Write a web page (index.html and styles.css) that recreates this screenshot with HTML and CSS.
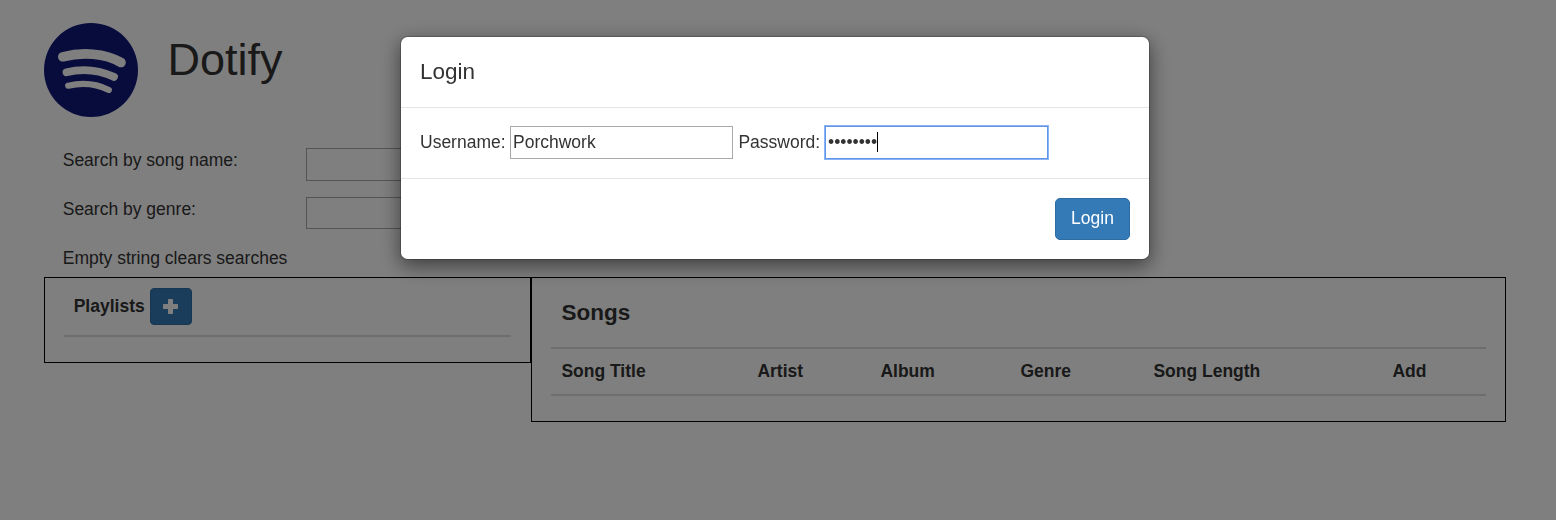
FILE: index.html
```html
<!DOCTYPE html>
<html lang="en">
<head>
<meta charset="utf-8">
<title>Dotify</title>
<link rel="stylesheet" href="styles.css">
</head>
<body>
<div class="page">
  <header class="brand">
    <svg class="logo" viewBox="0 0 94 94">
      <circle cx="47" cy="47" r="47" fill="#10187a"/>
      <g fill="none" stroke="#fff" stroke-linecap="round">
        <path stroke-width="9.6" d="M18.8 33.8C38 28.8 61 30 77 39.5"/>
        <path stroke-width="7.8" d="M22.5 49.3C38 45.4 55 47 70 53.9"/>
        <path stroke-width="6.2" d="M24.2 62.7C38 59.5 52 60.5 64.8 67"/>
      </g>
    </svg>
    <h1 class="title">Dotify</h1>
  </header>
  <div class="search">
    <label class="search-label" for="song">Search by song name:</label>
    <input class="field" id="song" type="text">
    <label class="search-label" for="genre">Search by genre:</label>
    <input class="field field-short" id="genre" type="text">
    <span class="search-label">Empty string clears searches</span>
  </div>
  <main class="columns">
    <section class="playlists">
      <div class="playlists-head">
        <span>Playlists</span>
        <button class="add" aria-label="Add playlist">
          <svg class="plus" viewBox="0 0 15 15"><path fill="#fff" d="M5.8 0h3.4q.8 0 .8.8V5h4.2q.8 0 .8.8v3.4q0 .8-.8.8H10v4.2q0 .8-.8.8H5.8q-.8 0-.8-.8V10H.8Q0 10 0 9.2V5.8Q0 5 .8 5H5V.8Q5 0 5.8 0Z"/></svg>
        </button>
      </div>
    </section>
    <section class="songs">
      <h2 class="songs-title">Songs</h2>
      <div class="songs-head">
        <span>Song Title</span><span>Artist</span><span>Album</span><span>Genre</span><span>Song Length</span><span>Add</span>
      </div>
    </section>
  </main>
</div>
<div class="backdrop">
  <div class="modal" role="dialog">
    <div class="modal-header">Login</div>
    <div class="modal-body">
      <label class="user-label" for="user">Username:</label>
      <input class="field" id="user" type="text" value="Porchwork">
      <span class="pass-label">Password:</span>
      <div class="field focused"><span>••••••••</span><span class="caret"></span></div>
    </div>
    <div class="modal-footer"><button class="login">Login</button></div>
  </div>
</div>
</body>
</html>
```

FILE: styles.css
```css
* { box-sizing: border-box; }
body {
  margin: 0;
  height: 520px;
  overflow: hidden;
  background: #fff;
  color: #333;
  font: 17.5px/25px "Liberation Sans", Arial, sans-serif;
}
.page { padding: 23px 50px 0 44px; }
.brand { display: flex; height: 125px; }
.logo { width: 94px; height: 94px; }
.title { margin: 12px 0 0 29.5px; font-size: 45px; line-height: 50px; font-weight: 400; }
.search {
  display: grid;
  grid-template-columns: 243px 223px;
  grid-template-rows: 49px 49px 31px;
  padding-left: 19px;
}
.search-label { margin-left: -0.3px; white-space: nowrap; }
.field {
  width: 223px;
  height: 33px;
  margin: 0;
  padding: 0 2px;
  border: 1px solid #a9a9a9;
  border-radius: 0;
  background: #fff;
  color: #333;
  font: inherit;
}
.field-short { height: 32px; }
.columns { display: flex; align-items: flex-start; font-weight: 700; }
.playlists { width: 487px; height: 86px; padding: 10px 19px 0; border: 1px solid #000; }
.playlists-head {
  display: flex;
  gap: 5px;
  height: 49px;
  padding-left: 9.7px;
  border-bottom: 2px solid #ddd;
}
.playlists-head > span { padding-top: 6px; }
.add {
  width: 42px;
  height: 37px;
  padding: 0 1px 0 0;
  border: 1px solid #2e6da4;
  border-radius: 4px;
  background: #337ab7;
  display: flex;
  align-items: center;
  justify-content: center;
}
.plus { width: 15px; height: 15px; }
.songs { width: 975px; height: 145px; padding: 0 19px; border: 1px solid #000; }
.songs-title { margin: 0; padding: 22px 0 0 10.4px; height: 69px; font-size: 22.5px; line-height: 25px; }
.songs-head {
  display: grid;
  grid-template-columns: 196px 123px 140px 133px 239px auto;
  height: 49px;
  padding: 10px 0 0 10.4px;
  border-top: 2px solid #ddd;
  border-bottom: 2px solid #ddd;
}
.backdrop {
  position: fixed;
  inset: 0;
  padding-top: 36px;
  background: rgba(0, 0, 0, 0.5);
}
.modal {
  width: 750px;
  margin: 0 0 0 400px;
  border: 1px solid rgba(0, 0, 0, 0.2);
  border-radius: 7.5px;
  background: #fff;
  background-clip: padding-box;
  box-shadow: 0 6px 19px rgba(0, 0, 0, 0.5);
}
.modal-header {
  height: 71px;
  padding: 22px 19px 0;
  border-bottom: 1px solid #e5e5e5;
  font-size: 22.5px;
}
.modal-body { display: flex; height: 70px; padding: 18px 19px 0; line-height: 31px; }
.user-label { width: 90px; padding-top: 1px; }
.pass-label { width: 92px; padding: 1px 0 0 5.4px; }
.focused { display: flex; border-color: #5f94e8; outline: 1px solid #8ab4f5; }
.caret { width: 1px; height: 20px; margin-top: 5px; background: #000; }
.modal-footer {
  display: flex;
  justify-content: flex-end;
  height: 81px;
  padding: 19px 19px 0;
  border-top: 1px solid #e5e5e5;
}
.login {
  width: 75px;
  height: 42px;
  padding: 0 0 2px;
  border: 1px solid #2e6da4;
  border-radius: 5px;
  background: #337ab7;
  color: #fff;
  font: inherit;
}
```
